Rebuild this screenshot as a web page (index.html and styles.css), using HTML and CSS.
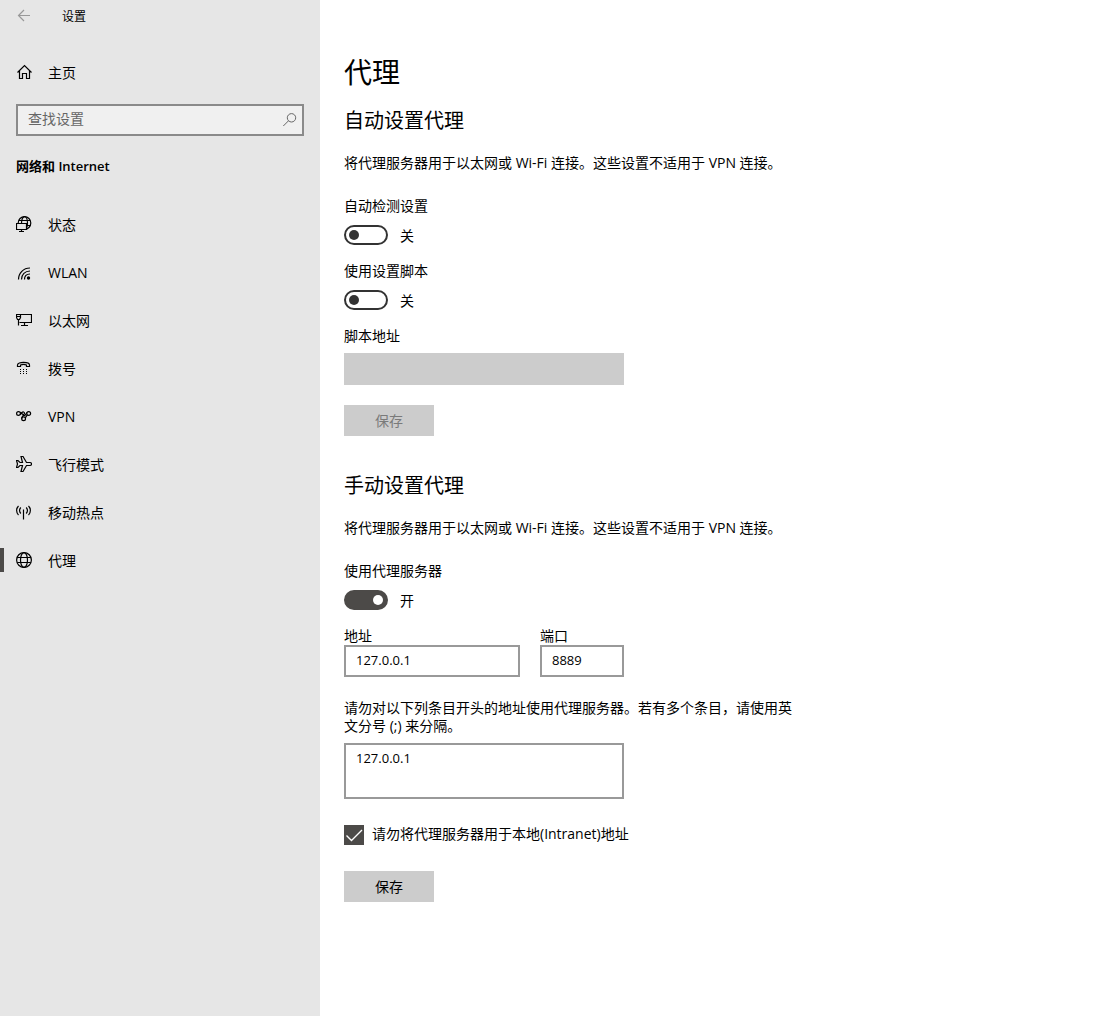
FILE: index.html
```html
<!DOCTYPE html>
<html lang="zh-CN">
<head>
    <meta charset="utf-8">
    <title>设置</title>
    <link rel="stylesheet" href="styles.css">
</head>
<body>

<div class="window">
    <aside class="sidebar">
        <div class="titlebar">
            <button class="back" aria-label="返回" disabled>
                <svg class="icon" viewBox="0 0 16 16"><path d="M14 7.5H2.5M8 2L2.5 7.5L8 13"/></svg>
            </button>
            <span>设置</span>
        </div>

        <a class="nav-item home" href="#">
            <svg class="icon" viewBox="0 0 16 16"><path d="M1.5 8.5L8.5 1.5L15.5 8.5M3.5 7V14.5H6.5V9.5H10.5V14.5H13.5V7"/></svg>
            <span>主页</span>
        </a>

        <div class="search">
            <input type="text" placeholder="查找设置" aria-label="查找设置">
            <svg class="icon" viewBox="0 0 16 16"><circle cx="10.5" cy="5.8" r="4.2"/><path d="M7.5 8.8L2.3 14"/></svg>
        </div>

        <h2 class="group">网络和 Internet</h2>

        <nav>
            <a class="nav-item" href="#">
                <svg class="icon" viewBox="0 0 16 16">
                    <circle cx="8.5" cy="7" r="6.3"/>
                    <ellipse cx="8.5" cy="7" rx="3" ry="6.3"/>
                    <path d="M3 4.500H14M8.500 9.500H14"/>
                    <path class="screen" d="M.5 7.500H10.500V13.500H.5Z"/>
                    <path d="M5.500 13.500V15.500M3 15.500H8"/>
                </svg>
                <span>状态</span>
            </a>
            <a class="nav-item" href="#">
                <svg class="icon" viewBox="0 0 16 16">
                    <path d="M2.5 15.500C2.5 9 7.5 4 14 4M5.500 15.500C5.500 10.500 9 7 14 7M8.500 15.500C8.500 12 10.500 10 14 10"/>
                    <circle class="dot" cx="12.5" cy="14" r="1.7"/>
                </svg>
                <span>WLAN</span>
            </a>
            <a class="nav-item" href="#">
                <svg class="icon" viewBox="0 0 16 16"><path d="M5 2.5H15.5V10.5H3.5M8.5 10.5V13.5M5 13.5H12M.5 2.5H4.5V5.5L3.5 7.5H1.5L.5 5.5ZM.5 4.5H4.5M2.5 7.5V13.5"/></svg>
                <span>以太网</span>
            </a>
            <a class="nav-item" href="#">
                <svg class="icon" viewBox="0 0 16 16">
                    <path d="M1.5 6.5V5C1.5 1.5 13.5 1.5 13.5 5V6.5H10.5V5C9 4.3 6 4.3 4.5 5V6.5Z"/>
                    <path class="dots" d="M4 9.500H11M4 11.500H11M4 13.500H11"/>
                </svg>
                <span>拨号</span>
            </a>
            <a class="nav-item" href="#">
                <svg class="icon" viewBox="0 0 16 16">
                    <circle cx="2.5" cy="5.5" r="1.9"/>
                    <circle cx="12.7" cy="5.500" r="1.9"/>
                    <circle cx="7.6" cy="10.800" r="1.9"/>
                    <path d="M3.900 6.800L6 4.500C7 3.500 8.500 4 8.500 5.300C8.500 6.500 5.700 8 5.700 10.800M4.100 4.300C6.500 4.800 6 7 8.800 7.500L11 4.500M11.300 6.900L9.300 9.900"/>
                </svg>
                <span>VPN</span>
            </a>
            <a class="nav-item" href="#">
                <svg class="icon" viewBox="0 0 16 16"><path d="M.5 4.500H2L4 6.500H6.500L5 .5H7L10.500 6.500H14C16 6.500 16 9.500 14 9.500H10.500L7 15.500H5L6.500 9.500H4L2 11.500H.5L1.500 8Z"/></svg>
                <span>飞行模式</span>
            </a>
            <a class="nav-item" href="#">
                <svg class="icon" viewBox="0 0 16 16"><path d="M2.5 2C0 4.500 0 8.500 2.500 11M12.500 2C15 4.500 15 8.500 12.500 11M4.800 3.500C3.300 5.300 3.300 7.700 4.800 9.500M10.200 3.500C11.700 5.300 11.700 7.700 10.200 9.500M7.500 5.500V15.500"/></svg>
                <span>移动热点</span>
            </a>
            <a class="nav-item active" href="#" aria-current="page">
                <svg class="icon" viewBox="0 0 16 16"><circle cx="8" cy="8" r="7.4"/><ellipse cx="8" cy="8" rx="3.5" ry="7.4"/><path d="M1.2 5.500H14.800M1.200 10.500H14.800"/></svg>
                <span>代理</span>
            </a>
        </nav>
    </aside>

    <main class="content">
        <h1>代理</h1>

        <section>
            <h2>自动设置代理</h2>
            <p class="intro">将代理服务器用于以太网或 Wi-Fi 连接。这些设置不适用于 VPN 连接。</p>

            <label for="detect">自动检测设置</label>
            <div class="toggle">
                <input type="checkbox" role="switch" id="detect">
                <span>关</span>
            </div>

            <label for="script">使用设置脚本</label>
            <div class="toggle">
                <input type="checkbox" role="switch" id="script">
                <span>关</span>
            </div>

            <label for="script-url">脚本地址</label>
            <input class="text script-url" type="text" id="script-url" disabled>
            <button class="save" disabled>保存</button>
        </section>

        <section>
            <h2>手动设置代理</h2>
            <p class="intro">将代理服务器用于以太网或 Wi-Fi 连接。这些设置不适用于 VPN 连接。</p>

            <label for="use-proxy">使用代理服务器</label>
            <div class="toggle">
                <input type="checkbox" role="switch" id="use-proxy" checked>
                <span>开</span>
            </div>

            <div class="server">
                <div class="field">
                    <label for="address">地址</label>
                    <input class="text" type="text" id="address" value="127.0.0.1">
                </div>
                <div class="field">
                    <label for="port">端口</label>
                    <input class="text" type="text" id="port" value="8889">
                </div>
            </div>

            <label class="note" for="exceptions">请勿对以下列条目开头的地址使用代理服务器。若有多个条目，请使用英文分号 (;) 来分隔。</label>
            <textarea class="text" id="exceptions">127.0.0.1</textarea>

            <label class="check" for="local">
                <span class="box">
                    <input type="checkbox" id="local" checked>
                    <svg viewBox="0 0 20 20"><path d="M2.5 10.5L7.5 15.5L18 5"/></svg>
                </span>
                <span>请勿将代理服务器用于本地(Intranet)地址</span>
            </label>

            <button class="save">保存</button>
        </section>
    </main>
</div>

</body>
</html>
```
FILE: styles.css
```css
* {
    box-sizing: border-box;
}

body {
    margin: 0;
    background-color: white;
    color: black;
    font-family: "Open Sans", "Noto Sans CJK SC", sans-serif;
    font-size: 14px;
    line-height: 18px;
}

h1, h2, p {
    margin: 0;
    font-weight: normal;
}

input, textarea, button {
    margin: 0;
    color: inherit;
    font: inherit;
}

.window {
    display: flex;
    min-height: 100vh;
}

/* sidebar */
.sidebar {
    flex: 0 0 320px;
    background-color: #e6e6e6;
}

.icon {
    flex: none;
    width: 16px;
    height: 16px;
    fill: none;
    stroke: currentColor;
    stroke-width: 1.2;
}

.icon .dot {
    fill: currentColor;
    stroke: none;
}

.icon .dots {
    stroke-dasharray: 1 2;
}

.icon .screen {
    fill: #e6e6e6;
}

.titlebar {
    display: flex;
    align-items: center;
    gap: 30px;
    height: 32px;
    padding: 0 16px;
    font-size: 12px;
}

.back {
    display: flex;
    padding: 0;
    border: none;
    background: none;
    color: #999;
}

.nav-item {
    display: flex;
    align-items: center;
    gap: 16px;
    height: 48px;
    padding: 0 16px;
    color: black;
    text-decoration: none;
}

.nav-item:hover {
    background-color: #dadada;
}

.titlebar span,
.nav-item span,
.toggle span {
    padding-top: 2px;
}

.home {
    margin: 16px 0 8px;
}

.active {
    padding-left: 12px;
}

.active::before {
    content: "";
    width: 4px;
    height: 24px;
    margin: 0 -4px 0 -12px;
    background-color: #4c4a48;
}

.search {
    display: flex;
    align-items: center;
    height: 32px;
    margin: 0 16px;
    padding: 0 5px 0 10px;
    border: 2px solid #8a8a8a;
    background-color: #f0f0f0;
    color: #666;
}

.search .icon {
    stroke-width: 1;
}

.search input {
    flex: 1;
    min-width: 0;
    padding: 0 0 2px;
    border: none;
    outline: none;
    background: none;
}

.search input::placeholder {
    color: #666;
}

.group {
    margin: 20px 16px 24px;
    font-size: 13px;
    font-weight: 600;
    line-height: 20px;
}

/* content */
.content {
    flex: 1;
    min-width: 0;
    padding: 54px 24px;
}

.content h1 {
    margin-bottom: 17px;
    font-size: 28px;
    line-height: 36px;
}

.content h2 {
    margin-bottom: 19px;
    font-size: 20px;
    line-height: 28px;
}

section + section {
    margin-top: 36px;
}

label {
    display: block;
}

.intro {
    margin-bottom: 25px;
}

.toggle {
    display: flex;
    align-items: center;
    gap: 12px;
    height: 20px;
    margin: 10px 0 17px;
}

.toggle input {
    display: flex;
    align-items: center;
    width: 44px;
    height: 20px;
    padding: 0 3px;
    border: 2px solid #333;
    border-radius: 10px;
    appearance: none;
}

.toggle input::before {
    content: "";
    width: 10px;
    height: 10px;
    border-radius: 5px;
    background-color: #333;
}

.toggle input:checked {
    justify-content: flex-end;
    border-color: #4c4a48;
    background-color: #4c4a48;
}

.toggle input:checked::before {
    background-color: white;
}

.text {
    display: block;
    width: 100%;
    max-width: 280px;
    height: 32px;
    padding: 4px 10px 6px;
    border: 2px solid #999;
    border-radius: 0;
    background-color: white;
    font-size: 13px;
}

.text:disabled {
    border-color: #ccc;
    background-color: #ccc;
}

.script-url {
    margin: 8px 0 20px;
}

.save {
    display: block;
    width: 90px;
    height: 31px;
    padding: 0;
    border: none;
    background-color: #ccc;
}

.save:disabled {
    color: #7a7a7a;
}

.server {
    display: grid;
    grid-template-columns: 176px 84px;
    gap: 20px;
}

.note {
    max-width: 456px;
    margin: 22px 0 8px;
}

textarea.text {
    height: 56px;
    resize: none;
}

.check {
    display: flex;
    gap: 8px;
    margin: 26px 0;
}

.box {
    display: grid;
    width: 20px;
    height: 20px;
}

.box input,
.box svg {
    grid-area: 1 / 1;
    width: 20px;
    height: 20px;
}

.box input {
    border: 2px solid #333;
    appearance: none;
}

.box input:checked {
    border-color: #4c4a48;
    background-color: #4c4a48;
}

.box svg {
    fill: none;
    stroke: white;
    stroke-width: 1.4;
    pointer-events: none;
}

.box input:not(:checked) + svg {
    visibility: hidden;
}
```
